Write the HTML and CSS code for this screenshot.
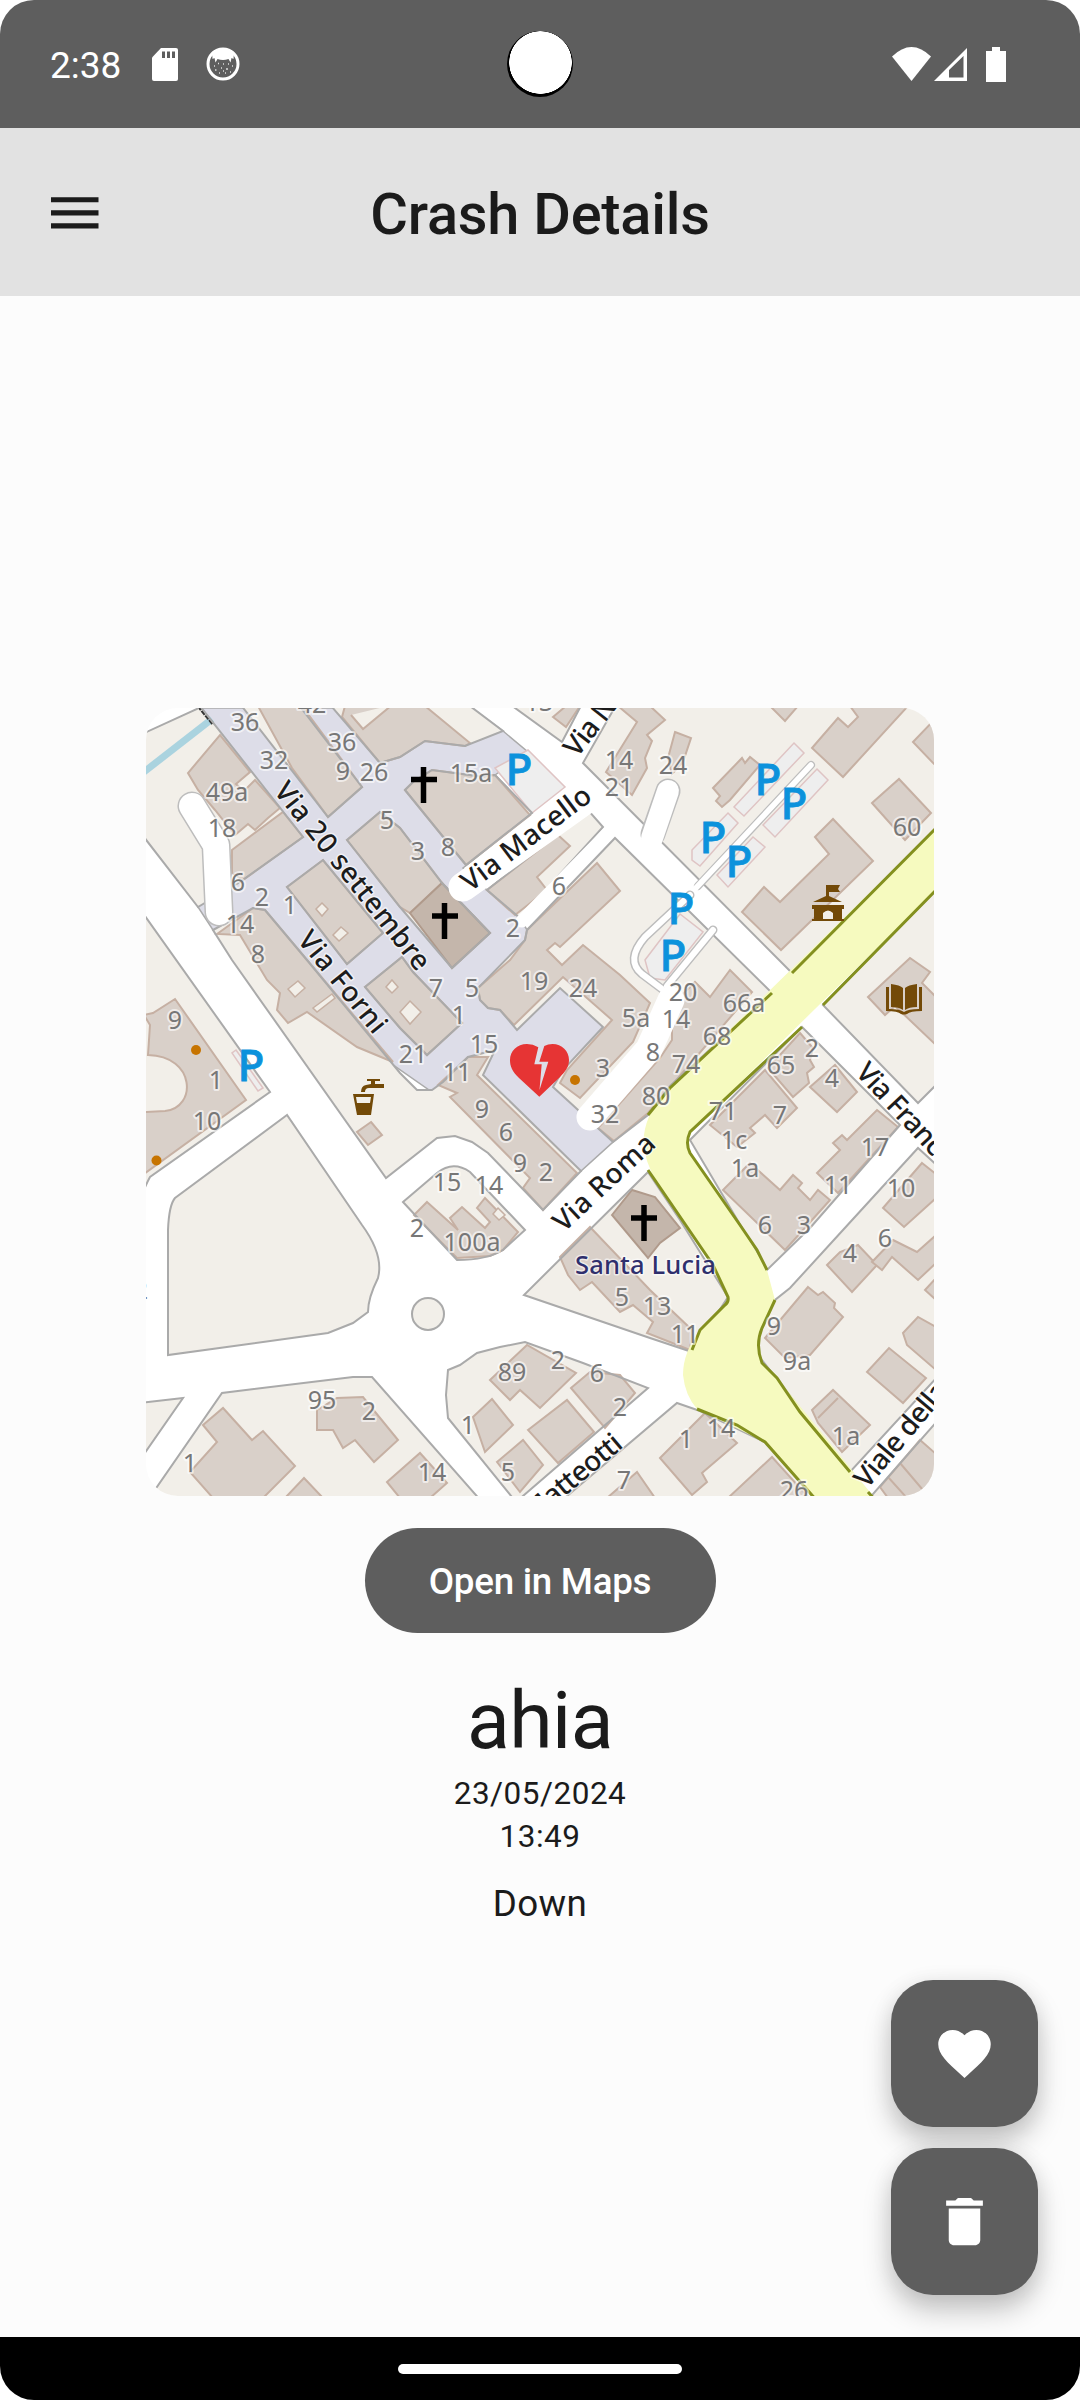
FILE: index.html
```html
<!DOCTYPE html>
<html lang="en">
<head>
<meta charset="utf-8">
<title>Crash Details</title>
<link rel="stylesheet" href="styles.css">
</head>
<body>
<div class="phone">
  <header class="status">
    <span class="time">2:38</span>
    <svg class="sd" viewBox="0 0 26 33"><path d="M9 0H24a2 2 0 0 1 2 2V31a2 2 0 0 1-2 2H2a2 2 0 0 1-2-2V9.500Z" fill="#fff"/><path d="M10 3.500h3v6.500h-3zM15 3.500h3v6.500h-3zM20 3.500h3v6.500h-3z" fill="#5e5e5e"/></svg>
    <svg class="cat" viewBox="0 0 34 34"><circle cx="17" cy="17" r="15" fill="none" stroke="#fff" stroke-width="3"/><path d="M6 5Q17-3 28 5L27.500 12 25.500 11 24.500 15.500 22.500 12Q17 14 11.500 12L9.500 15.500 8.500 11 6.500 12Z" fill="#fff"/><path d="M8 19h1M12 16.500h1M17 17h1M22 17h1M26 19h1M9 23h1.500M15 21h1M20 22h2M13 26h1M19 26h1M24 25h1M17 24h1" stroke="#ddd" stroke-width="1.300"/></svg>
    <span class="camera"></span>
    <svg class="signals" viewBox="0 0 114 35" fill="#fff"><path d="M0 9.500Q19.500-9.500 39 9.500L19.500 34Z"/><path fill-rule="evenodd" d="M42 34L75 1V34ZM57 30.500H71.500V9L57 23Z"/><path d="M100 0h8v4h6V35H94V4h6Z"/></svg>
  </header>
  <div class="appbar">
    <svg class="menu" viewBox="0 0 48 32"><path d="M0 0h48v5.250H0zM0 13.300h48v5.250H0zM0 26.400h48v5.250H0z"/></svg>
    <h1>Crash Details</h1>
  </div>
  <main>
    <svg class="map" viewBox="146 708 788 788">
      <defs>
      <g id="blocks">
        <path d="M140 735L197 709 200 706 303 837 240 882 198 907 140 832Z"/>
        <path d="M237 700H295L362 787 328 817Z"/>
        <path d="M326 700L380 763 400 757 425 741 465 746 503 731 462 700Z"/>
        <path d="M405 790L413 782 432 770 477 776 495 775 532 813 466 865Z"/>
        <path d="M347 840L380 812 400 828 442 883 490 933 452 968 400 907Z"/>
        <path d="M287 887L323 860 383 933 347 964Z"/>
        <path d="M365 987L402 957 413 972 462 1023 427 1055 400 1028Z"/>
        <path d="M213 930L253 908 265 910 307 960 400 1073 417 1090 432 1090 443 1082 468 1057 495 1050 483 1075 581 1171 543 1210 488 1153 472 1142 455 1136 437 1138 386 1178 232 960Z"/>
        <path d="M487 890L588 810 603 827 520 918Z"/>
        <path d="M527 930L615 838 772 993 670 1086 648 1115 613 1142 553 1087 563 1070 603 1027 560 988 517 1030 500 1010 488 1008 480 1000 478 988 525 940Z"/>
        <path d="M504 700L562 742 584 700Z"/>
        <path d="M619 700L583 763 792 973 940 825V700Z"/>
        <path d="M940 886L823 1005 918 1103 940 1081Z"/>
        <path d="M802 1027L900 1125 810 1228 767 1270 690 1140Z"/>
        <path d="M940 1168L918 1148 843 1230 790 1288 775 1300 750 1345 850 1472 940 1374Z"/>
        <path d="M940 1418L866 1502H940Z"/>
        <path d="M648 1172L524 1295 650 1338 692 1352 728 1297 680 1220Z"/>
        <path d="M448 1370L460 1365 477 1353 500 1347 525 1342 583 1363 648 1388 516 1502 448 1418 446 1395Z"/>
        <path d="M677 1403L700 1411 765 1442 818 1502H560Z"/>
        <path d="M150 1497L222 1393 353 1377 372 1377 482 1502H140Z"/>
        <path d="M140 1403L183 1398 140 1460Z"/>
        <path d="M287 1115L175 1198Q169 1205 168 1230V1355L328 1333 353 1323 368 1312Q368 1298 378 1278 384 1255 362 1225Z"/>
        <path d="M140 909L270 1092 150 1177Q146 1184 140 1200Z"/>
        <path d="M403 1202L437 1173Q453 1160 470 1172L525 1230 503 1250Q487 1260 457 1260Z"/>
        <circle cx="428" cy="1314" r="16"/>
      </g>
      </defs>
      <path class="ped" d="M200 708H472L503 731 528 752 495 775 532 813 463 868 487 890 520 918 527 930 600 1000 620 1100 613 1142 581 1171 470 1095 432 1092 300 1000 213 930 198 907Z"/>
      <use href="#blocks" class="land"/>
      <path d="M140 775L212 719" stroke="#aad3df" stroke-width="7"/>
      <path d="M198 706L213 724" stroke="#333" stroke-width="3" stroke-dasharray="5 1"/>
      <g class="bld">
        <path d="M220 735L250 772 236 784 244 791 255 780 280 808 268 818 255 830 248 824 235 835 215 810 198 790 188 773Z"/>
        <path d="M283 812L303 837 243 880 232 873V850Z"/>
        <path d="M258 706H302L362 787 328 817 292 768Z"/>
        <path d="M345 706H425L470 743 465 746 425 741 400 757 380 763 342 717ZM351 715L363 729 392 705"/>
        <path d="M405 790L413 782 432 770 477 776 495 775 530 815 466 865Z"/>
        <path d="M347 840L380 812 400 828 442 883 410 913 400 907Z"/>
        <path class="church" d="M442 883L490 933 452 968 410 913Z"/>
        <path d="M287 887L323 860 383 933 347 964Z"/>
        <path d="M365 987L402 957 413 972 462 1023 427 1055 400 1028Z"/>
        <path d="M217 934L253 908 265 910 307 960 393 1062 357 1047 307 1012 288 1023 277 1010 280 993 267 980 255 960 240 935Z"/>
        <path d="M371 1122L382 1135 368 1145 357 1132Z"/>
        <path d="M438 1085L468 1057H488L477 1075 577 1173 543 1210 523 1188 530 1178 450 1097 457 1093Z"/>
        <path d="M427 1202L458 1230 450 1218 462 1207 485 1228 490 1222 477 1208 485 1198 518 1232 503 1250 490 1256 457 1258 414 1215Z"/>
        <path d="M487 890L558 835 570 846 537 877 547 890 515 915Z"/>
        <path d="M527 930L597 863 620 891 560 947 555 943 547 950 562 965 583 945 620 975 650 1003 633 1042 580 1098 560 1083 567 1070 612 1020 563 977 514 1025 500 1010 488 1008 480 1000 478 988 510 960 525 940Z"/>
        <path d="M695 982L710 997 730 970 752 992 648 1113 614 1141 598 1128 660 1058 672 1040 672 1005Z"/>
        <path d="M618 706H650L665 720 647 735 652 741 645 758 647 768 632 795 606 772 637 722Z"/>
        <path d="M553 717L566 706H580L566 727Z"/>
        <path d="M675 732L691 738 683 762 672 774 668 758Z"/>
        <path d="M713 788L742 758 745 763 750 757 760 765 730 800 722 807 716 801 720 796Z"/>
        <path d="M770 706H798L785 721Z"/>
        <path d="M850 706L858 717 848 727 838 718 812 748 843 777 908 706Z"/>
        <path d="M913 742L936 718V766Z"/>
        <path d="M872 803L899 779 931 813 905 840Z"/>
        <path d="M815 837L833 819 873 861 781 950 742 912 764 887 780 902 829 854Z"/>
        <path d="M868 997L910 958 930 972 922 983 936 997V1045L895 1006 885 1015Z"/>
        <path d="M800 1033L813 1048 810 1060 814 1067 807 1073 809 1083 793 1097 768 1068Z"/>
        <path d="M765 1070L797 1108 777 1128 765 1115 750 1128 755 1133 737 1147 710 1125Z"/>
        <path d="M810 1087L835 1065 857 1092 837 1112Z"/>
        <path d="M877 1110L898 1127 838 1193 817 1173 840 1150 833 1143 842 1135 847 1140Z"/>
        <path d="M750 1163L780 1190 793 1175 802 1183 798 1188 810 1200 818 1190 830 1200 785 1250 723 1190Z"/>
        <path d="M922 1163L936 1174V1198L904 1227 883 1208Z"/>
        <path d="M827 1265L840 1252 858 1245 877 1265 852 1292Z"/>
        <path d="M893 1240L917 1252 936 1235V1263L918 1280 892 1257 882 1270 872 1262Z"/>
        <path d="M936 1278L925 1290 936 1300Z"/>
        <path d="M808 1287L818 1295 823 1292 835 1303 834 1308 843 1317 810 1355 785 1358 765 1338Z"/>
        <path d="M903 1333L918 1317 936 1327V1370L907 1345Z"/>
        <path d="M867 1372L889 1348 926 1378 903 1403Z"/>
        <path d="M812 1410L833 1390 870 1425 842 1452 818 1423ZM818 1418L838 1398"/>
        <path d="M880 1487L920 1440 936 1454V1498H888ZM900 1463L928 1496M888 1477L906 1497"/>
        <path class="church" d="M612 1215L632 1190 655 1197 680 1228 660 1243 648 1258Z"/>
        <path d="M560 1257L590 1227 650 1290 692 1330 690 1350 647 1333 653 1322 633 1305 620 1312 592 1282 580 1290 568 1275Z"/>
        <path d="M490 1380L527 1345 576 1373 540 1408 520 1390 510 1400Z"/>
        <path d="M473 1417L492 1399 513 1425 485 1452Z"/>
        <path d="M571 1388L590 1372 620 1375 635 1393 605 1428Z"/>
        <path d="M528 1430L567 1400 594 1432 558 1463Z"/>
        <path d="M497 1462L523 1440 543 1465 520 1492Z"/>
        <path d="M660 1458L705 1413 737 1443 702 1473 707 1482 692 1495Z"/>
        <path d="M728 1498L772 1457 809 1498Z"/>
        <path d="M607 1498L637 1472 655 1498Z"/>
        <path d="M203 1425L223 1408 252 1440 263 1431 295 1466 263 1498H213L190 1472 217 1442Z"/>
        <path d="M285 1498L304 1478 323 1498Z"/>
        <path d="M317 1410L337 1398 363 1397 398 1440 374 1462 355 1440 343 1448 333 1430H317Z"/>
        <path d="M387 1482L420 1453 447 1483 430 1498H400Z"/>
        <path d="M175 999L246 1100 144 1174V1112L165 1111C197 1108 196 1056 148 1055L150 1025 144 1015 153 1013Z"/>
      </g>
      <g class="court">
        <path d="M322 903l6 6-6 7-6-7zM341 927l7 6-9 8-6-6zM392 980l6 7-6 6-6-6zM410 1001l11 11-11 12-10-12zM298 981l7 7-10 9-7-8zM332 994l3 4-18 14-4-4zM498 1208l7 7-6 5-6-6z"/>
      </g>
      <g class="park">
        <path d="M495 768L528 750 565 787 532 813Z"/>
        <path d="M794 743L804 753 744 816 734 807Z"/><path d="M817 769L828 780 775 837 763 825Z"/>
        <path d="M728 813L738 823 700 866 692 860V850Z"/><path d="M753 837L765 847 728 887 717 875Z"/>
        <path d="M680 914L703 932 665 980 650 978 645 960Z"/>
        <path d="M236 1050L263 1088 258 1091 232 1053Z"/>
      </g>
      <use href="#blocks" class="outline"/>
      <g class="roads casing">
        <path d="M192 806L216 845 219 912" stroke-width="29"/>
        <path d="M668 791L653 834" stroke-width="25"/>
        <path d="M698 886L811 765" stroke-width="8"/>
        <path d="M713 930L667 986" stroke-width="9"/><path d="M690 895L645 937Q625 960 642 974L666 992" stroke-width="9"/>
      </g>
      <g class="roads">
        <path d="M192 806L216 845 219 912" stroke-width="26"/>
        <path d="M463 887L592 795" stroke-width="29"/>
        <path d="M668 791L652 838" stroke-width="22"/>
        <path d="M695 889L811 765" stroke-width="5.500"/>
        <path d="M590 1117L649 1049 671 1000" stroke-width="27"/>
        <path d="M713 930L667 986" stroke-width="6"/><path d="M690 895L645 937Q625 960 642 974L666 992" stroke-width="6"/>
        <path d="M522 921L611 830" stroke-width="13"/>
      </g>
      <path class="yellow" d="M940 824L670 1088Q647 1110 644 1135 642 1158 657 1182L713 1265 728 1297 725 1305 700 1330Q683 1352 683 1375 685 1395 697 1409L765 1442 818 1502H878L777 1378 762 1363 758 1348 762 1328 775 1300 767 1270 740 1225 690 1153 687 1143 690 1132 940 886Z"/>
      <path class="edge" d="M940 824L792 973M772 993L670 1088 648 1115M648 1170L713 1265 728 1297Q729 1302 725 1305L700 1330 692 1350M697 1409L737 1425 765 1442 818 1502M940 886L823 1005M802 1027L690 1132Q685 1143 690 1153L740 1225 757 1250 767 1270M775 1300L762 1328Q755 1345 762 1363L777 1378 800 1412 850 1472M868 1492L878 1503"/>
      <g class="num">
        <text x="245" y="731">36</text><text x="312" y="713">42</text><text x="342" y="751">36</text><text x="274" y="769">32</text><text x="343" y="780">9</text><text x="374" y="781">26</text><text x="227" y="801">49a</text><text x="222" y="837">18</text><text x="387" y="829">5</text><text x="238" y="891">6</text><text x="262" y="906">2</text><text x="290" y="914">1</text><text x="240" y="933">14</text><text x="258" y="963">8</text>
        <text x="471" y="782">15a</text><text x="619" y="769">14</text><text x="619" y="796">21</text><text x="418" y="860">3</text><text x="448" y="856">8</text><text x="559" y="895">6</text><text x="513" y="937">2</text><text x="539" y="711">13</text><text x="673" y="774">24</text><text x="907" y="836">60</text>
        <text x="175" y="1029">9</text><text x="216" y="1089">1</text><text x="207" y="1130">10</text><text x="436" y="997">7</text><text x="472" y="997">5</text><text x="534" y="990">19</text><text x="583" y="997">24</text><text x="459" y="1024">1</text><text x="636" y="1027">5a</text><text x="484" y="1053">15</text><text x="413" y="1063">21</text><text x="457" y="1081">11</text><text x="603" y="1077">3</text><text x="653" y="1061">8</text><text x="482" y="1118">9</text><text x="605" y="1123">32</text><text x="656" y="1105">80</text><text x="506" y="1141">6</text><text x="520" y="1172">9</text><text x="546" y="1181">2</text><text x="447" y="1191">15</text><text x="489" y="1194">14</text><text x="417" y="1237">2</text>
        <text x="683" y="1001">20</text><text x="676" y="1028">14</text><text x="744" y="1012">66a</text><text x="717" y="1045">68</text><text x="812" y="1057">2</text><text x="686" y="1073">74</text><text x="781" y="1074">65</text><text x="832" y="1087">4</text><text x="723" y="1120">71</text><text x="780" y="1124">7</text><text x="734" y="1149">1c</text><text x="875" y="1156">17</text><text x="745" y="1177">1a</text><text x="838" y="1194">11</text><text x="901" y="1197">10</text><text x="765" y="1234">6</text><text x="804" y="1234">3</text>
        <text x="472" y="1251">100a</text><text x="512" y="1381">89</text><text x="322" y="1409">95</text><text x="369" y="1420">2</text><text x="468" y="1434">1</text><text x="190" y="1472">1</text><text x="432" y="1481">14</text><text x="508" y="1481">5</text><text x="141" y="1299">2</text>
        <text x="850" y="1262">4</text><text x="885" y="1247">6</text><text x="622" y="1306">5</text><text x="657" y="1315">13</text><text x="685" y="1343">11</text><text x="774" y="1335">9</text><text x="797" y="1370">9a</text><text x="558" y="1369">2</text><text x="597" y="1382">6</text><text x="620" y="1416">2</text><text x="721" y="1437">14</text><text x="686" y="1448">1</text><text x="846" y="1445">1a</text><text x="624" y="1489">7</text><text x="794" y="1499">26</text>
      </g>
      <g class="street">
        <text transform="translate(352 876) rotate(51.500)" y="9" text-anchor="middle" textLength="231">Via 20 settembre</text>
        <text transform="translate(342 982) rotate(51)" y="9" text-anchor="middle" textLength="122">Via Forni</text>
        <text transform="translate(526 839) rotate(-37)" y="9" text-anchor="middle" textLength="154">Via Macello</text>
        <text transform="translate(604 1183) rotate(-43)" y="9" text-anchor="middle" textLength="127">Via Roma</text>
        <text transform="translate(861 1067) rotate(47)" y="9">Via Francesco</text>
        <text transform="translate(570 753) rotate(-52)" y="9">Via N</text>
        <text transform="translate(860 1484) rotate(-50)" y="9">Viale della</text>
        <text transform="translate(618 1440) rotate(-40)" y="9" text-anchor="end">Via Matteotti</text>
        <text class="lucia" x="645" y="1274" text-anchor="middle" textLength="140">Santa Lucia</text>
      </g>
      <g class="p">
        <text x="519" y="785">P</text><text x="768" y="795">P</text><text x="794" y="819">P</text><text x="713" y="853">P</text><text x="739" y="877">P</text><text x="681" y="924">P</text><text x="673" y="971">P</text><text x="251" y="1081">P</text>
      </g>
      <path d="M423.500 767v36M411 779.500h26M444.500 903v36M432 916h26M644 1205v36M631 1218h26" stroke="#000" stroke-width="5.500"/>
      <g fill="#734a08">
        <path d="M826 885h14l-2 4 2 3h-11v4l13 6H813l13-6zM812 905h32v4h-2v10h2v2H812v-2h2v-10h-2zM823 919h10v-6q-5-5-10 0z" fill-rule="evenodd"/>
        <path d="M367 1079h13v2h-5v3h9v4h-15q-4 0-4 4h-4q0-6 5-7l5-1v-3h-4zM353 1094h21l-3 21h-14zM356 1097l1 6h13l1-6z" fill-rule="evenodd"/>
        <path d="M891 984q9 1 12 4v22q-4-3-12-3zM905 988q3-3 12-4v23q-8 0-12 3zM886 987h3v22q11 0 15 3 4-3 15-3v-22h3v24q-12 0-15 3-3 1-6 0-3-3-15-3z"/>
      </g>
      <g fill="#c77400"><circle cx="196" cy="1050" r="5"/><circle cx="156.500" cy="1160.500" r="5"/><circle cx="575" cy="1080" r="5"/></g>
      <path fill="#e63434" d="M539.300 1096.700L519 1078C512 1071.500 510 1066 510 1060 510 1051 517 1044 527 1044Q533 1044 538.300 1047.300L534.300 1064.300H541.700L539.500 1090 548.300 1061.700H539.300L544.300 1046Q548 1044 552.500 1044C562 1044 569 1051 569 1060 569 1067 565 1072 560 1077Z"/>
    </svg>
    <button class="open">Open in Maps</button>
    <h2>ahia</h2>
    <p class="date">23/05/2024</p>
    <p class="date">13:49</p>
    <p class="desc">Down</p>
    <div class="fabs">
      <button class="fab" aria-label="Favourite"><svg viewBox="0 0 24 24"><path d="M12 21.350l-1.450-1.320C5.400 15.360 2 12.280 2 8.500 2 5.420 4.420 3 7.500 3c1.740 0 3.410.81 4.500 2.090C13.090 3.810 14.760 3 16.500 3 19.580 3 22 5.420 22 8.500c0 3.780-3.400 6.860-8.550 11.540L12 21.350z"/></svg></button>
      <button class="fab" aria-label="Delete"><svg viewBox="0 0 24 24"><path d="M6 19c0 1.100.9 2 2 2h8c1.100 0 2-.9 2-2V7H6v12zM19 4h-3.500l-1-1h-5l-1 1H5v2h14V4z"/></svg></button>
    </div>
  </main>
  <footer class="nav"><span></span></footer>
</div>
</body>
</html>
```
FILE: styles.css
```css
body { margin: 0; background: #fff; font-family: Roboto, sans-serif; color: #1b1b1b; }
.phone { width: 1080px; height: 2400px; display: flex; flex-direction: column; overflow: hidden; border-radius: 34px; background: #fcfcfc; }

.status { position: relative; height: 128px; flex: none; display: flex; box-sizing: border-box; padding: 0 74px 0 50px; background: #5e5e5e; color: #fff; align-items: center; }
.time { width: 102px; padding-top: 4px; font-size: 37px; line-height: 44px; }
.sd { width: 26px; height: 33px; margin-right: 28px; }
.cat { width: 34px; height: 34px; }
.signals { width: 114px; height: 35px; margin-left: auto; }
.camera { position: absolute; left: 507px; top: 31px; width: 66px; height: 66px; border-radius: 50%; background: radial-gradient(circle 32px at 33.500px 31.500px, #fff 31px, #000 31.500px); }

.appbar { height: 164px; padding-top: 4px; flex: none; display: flex; align-items: center; justify-content: center; background: #e2e2e2; position: relative; }
.menu { position: absolute; left: 51px; top: 68.600px; width: 47.500px; height: 32px; fill: #1b1b1b; }
h1 { margin: 0; font-size: 57.750px; line-height: 74px; font-weight: 500; letter-spacing: -.25px; }

main { position: relative; flex: 1; display: flex; flex-direction: column; align-items: center; padding-top: 412px; }
.map { width: 788px; height: 788px; flex: none; border-radius: 32px; background: #fff; margin-bottom: 32px; }
button { border: 0; padding: 0; color: #fff; background: #5e5e5e; font-family: inherit; }
.open { width: 351px; height: 105px; padding-top: 2px; border-radius: 53px; font-size: 36.750px; font-weight: 500; letter-spacing: -.28px; margin-bottom: 37px; }
h2 { margin: 0; font-size: 78.750px; line-height: 102px; font-weight: 400; letter-spacing: -.5px; }
p { margin: 0; }
.date { font-size: 31.500px; line-height: 43px; letter-spacing: .5px; }
.desc { margin-top: 20px; font-size: 36.750px; line-height: 52px; letter-spacing: .4px; }

.fabs { position: absolute; right: 42px; bottom: 42px; display: flex; flex-direction: column; gap: 21px; }
.fab { width: 147px; height: 147px; border-radius: 42px; display: grid; place-items: center; box-shadow: 0 16px 28px rgba(0,0,0,.22), 0 2px 22px rgba(0,0,0,.07); }
.fab svg { width: 63px; height: 63px; fill: #fff; }
.nav { height: 63px; flex: none; display: grid; place-items: center; background: #000; }
.nav span { width: 284px; height: 10px; border-radius: 5px; background: #fff; }

.ped { fill: #dddde8; stroke: #aaa; stroke-width: 1.500; }
.land { fill: #f2efe9; }
.outline { fill: none; stroke: #aaa; stroke-width: 2; }
.bld { fill: #d9d0c9; stroke: #c6b0a3; stroke-width: 2; }
.church { fill: #c4b6ab; stroke: #b09a8b; }
.court { fill: #f2efe9; stroke: #c6b0a3; stroke-width: 1.500; }
.park { fill: #eee; stroke: #dfc4c4; stroke-width: 1.500; }
.roads { fill: none; stroke: #fff; stroke-linecap: round; stroke-linejoin: round; }
.roads.casing { stroke: #bdbdbd; }
.yellow { fill: #f6fabf; }
.edge { fill: none; stroke: #84901f; stroke-width: 3; }
.num, .street { font-family: "Noto Sans", sans-serif; paint-order: stroke; stroke-linejoin: round; }
.num { font-size: 25px; text-anchor: middle; fill: #777; stroke: rgba(255,255,255,.6); stroke-width: 4px; }
.street { font-size: 28px; font-weight: 500; letter-spacing: -.8px; fill: #1c1c1c; stroke: rgba(255,255,255,.6); stroke-width: 3px; }
.lucia { font-size: 25.500px; fill: #2f2f6d; }
.p { font-family: "Noto Sans", sans-serif; font-weight: 500; font-size: 44px; text-anchor: middle; fill: #0c92dc; stroke: #0c92dc; stroke-width: .8px; }
```
